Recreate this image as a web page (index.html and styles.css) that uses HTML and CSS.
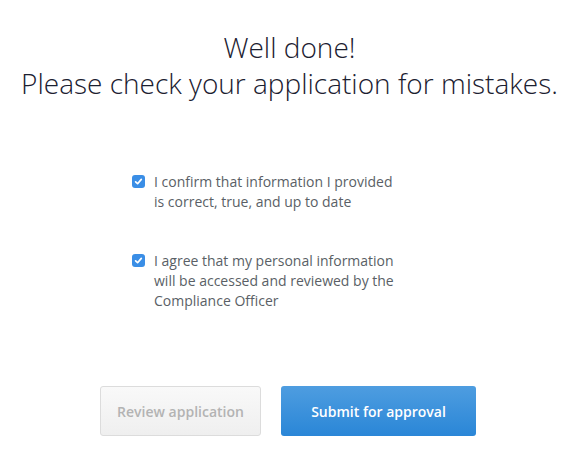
FILE: index.html
```html
<!DOCTYPE html>
<html>
<head>
<meta charset="utf-8">
<link rel="stylesheet" href="styles.css">
</head>
<body>
<div class="page">
  <h1 class="title">Well done!<br>Please check your application for mistakes.</h1>
  <div class="checks">
    <label class="check">
      <span class="box"><svg viewBox="0 0 13 13" width="13" height="13"><path d="M3.6 6.8 L5.6 8.7 L9.3 4.4" fill="none" stroke="#fff" stroke-width="1.7" stroke-linecap="round" stroke-linejoin="round"/></svg></span>
      <span class="text">I confirm that information I provided is correct, true, and up to date</span>
    </label>
    <label class="check">
      <span class="box"><svg viewBox="0 0 13 13" width="13" height="13"><path d="M3.6 6.8 L5.6 8.7 L9.3 4.4" fill="none" stroke="#fff" stroke-width="1.7" stroke-linecap="round" stroke-linejoin="round"/></svg></span>
      <span class="text">I agree that my personal information will be accessed and reviewed by the Compliance Officer</span>
    </label>
  </div>
  <div class="actions">
    <button class="btn btn-secondary">Review application</button>
    <button class="btn btn-primary">Submit for approval</button>
  </div>
</div>
</body>
</html>
```
FILE: styles.css
```css
html, body {
  margin: 0;
  padding: 0;
  background: #fff;
}
body {
  font-family: "Open Sans", "Liberation Sans", sans-serif;
}
.page {
  width: 579px;
  padding-top: 29px;
}
.title {
  margin: 0;
  font-size: 28px;
  font-weight: 300;
  line-height: 36px;
  color: #1b2030;
  text-align: center;
}
.checks {
  margin: 71px 0 0 132px;
  display: flex;
  flex-direction: column;
  gap: 39px;
}
.check {
  display: flex;
  align-items: flex-start;
  gap: 9px;
}
.box {
  width: 13px;
  height: 13px;
  margin-top: 3px;
  border-radius: 3px;
  background: #3a8ee6;
  display: flex;
  flex-shrink: 0;
}
.text {
  width: 245px;
  font-size: 14px;
  line-height: 20px;
  color: #5a5f66;
}
.actions {
  margin-top: 75px;
  display: flex;
  justify-content: center;
  gap: 20px;
  padding-right: 3px;
}
.btn {
  height: 50px;
  border-radius: 3px;
  font-family: "Open Sans", "Liberation Sans", sans-serif;
  font-size: 14px;
  font-weight: 600;
  cursor: pointer;
}
.btn-secondary {
  width: 161px;
  background: linear-gradient(#f9f9f9, #efefef);
  border: 1px solid #dcdcdc;
  color: #b3b3b3;
}
.btn-primary {
  width: 195px;
  border: none;
  background: linear-gradient(#4e9de0, #2a86d7);
  color: #fff;
}
```
